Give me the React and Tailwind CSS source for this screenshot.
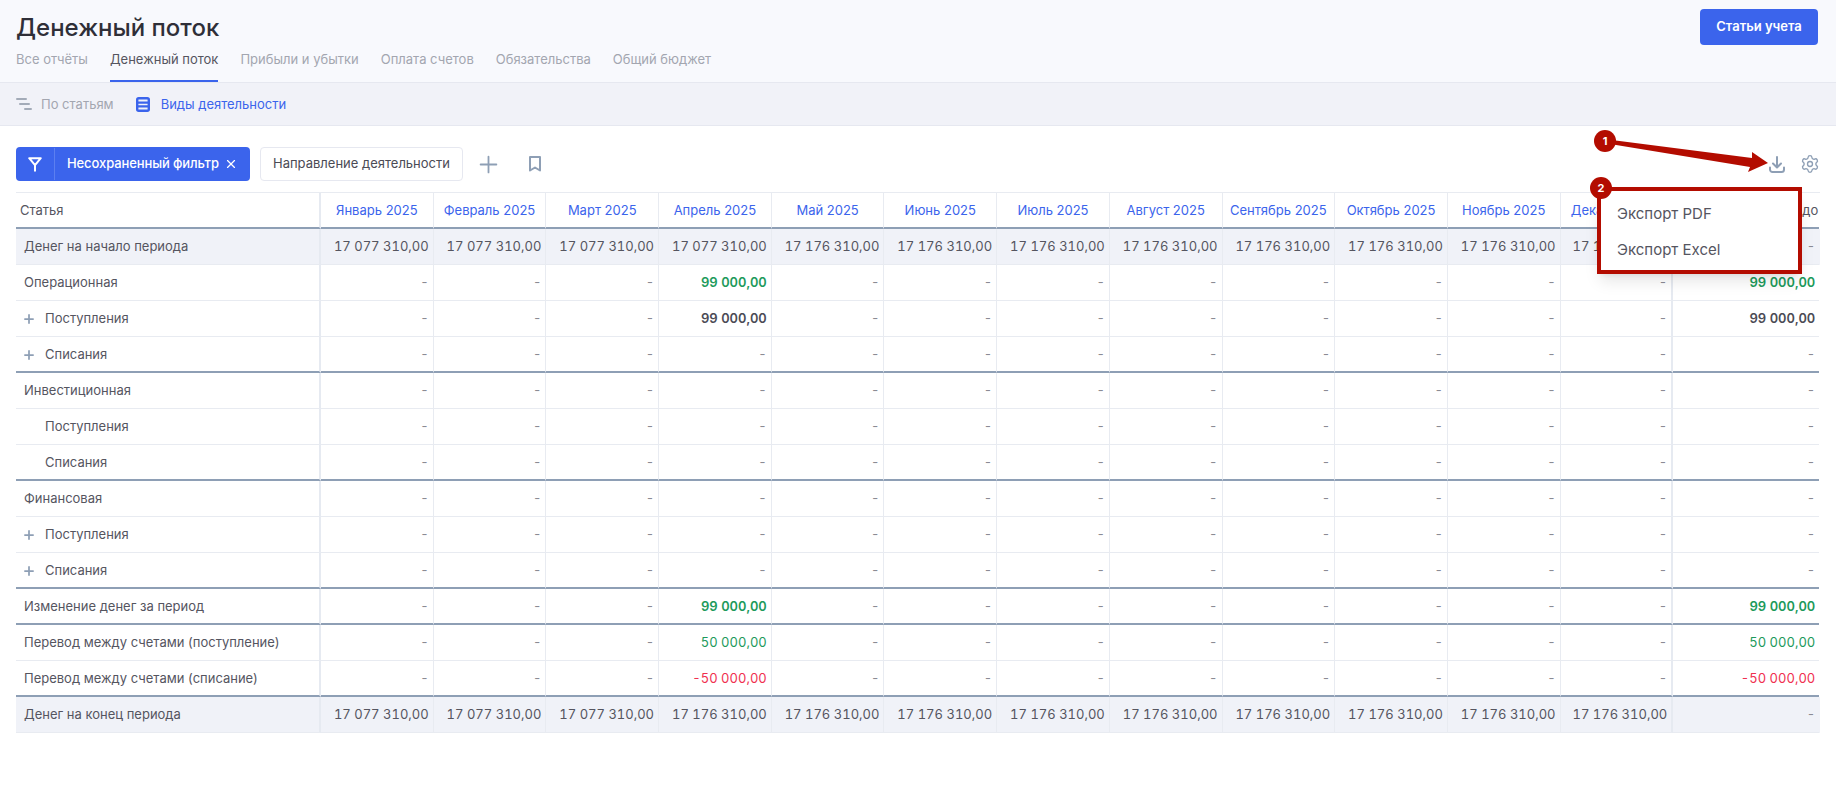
import { Plus, X, Settings } from "lucide-react";

const tabs = ["Все отчёты", "Денежный поток", "Прибыли и убытки", "Оплата счетов", "Обязательства", "Общий бюджет"];
const months = ["Январь", "Февраль", "Март", "Апрель", "Май", "Июнь", "Июль", "Август", "Сентябрь", "Октябрь", "Ноябрь", "Декабрь"];

const start = ["17 077 310,00", "17 077 310,00", "17 077 310,00", "17 077 310,00", "17 176 310,00", "17 176 310,00", "17 176 310,00", "17 176 310,00", "17 176 310,00", "17 176 310,00", "17 176 310,00", "17 176 310,00", "-"];
const end = ["17 077 310,00", "17 077 310,00", "17 077 310,00", "17 176 310,00", "17 176 310,00", "17 176 310,00", "17 176 310,00", "17 176 310,00", "17 176 310,00", "17 176 310,00", "17 176 310,00", "17 176 310,00", "-"];

const april = (value) => {
  const cells = Array(13).fill("-");
  cells[3] = value;
  cells[12] = value;
  return cells;
};
const empty = Array(13).fill("-");

const rows = [
  { label: "Денег на начало периода", cells: start, gray: true },
  { label: "Операционная", cells: april("99 000,00"), color: "text-[#1d9a5b] font-semibold" },
  { label: "Поступления", cells: april("99 000,00"), color: "text-[#4b4b55] font-semibold", child: true, plus: true },
  { label: "Списания", cells: empty, child: true, plus: true, heavy: true },
  { label: "Инвестиционная", cells: empty },
  { label: "Поступления", cells: empty, child: true },
  { label: "Списания", cells: empty, child: true, heavy: true },
  { label: "Финансовая", cells: empty },
  { label: "Поступления", cells: empty, child: true, plus: true },
  { label: "Списания", cells: empty, child: true, plus: true, heavy: true },
  { label: "Изменение денег за период", cells: april("99 000,00"), color: "text-[#1d9a5b] font-semibold", heavy: true },
  { label: "Перевод между счетами (поступление)", cells: april("50 000,00"), color: "text-[#1d9a5b]" },
  { label: "Перевод между счетами (списание)", cells: april("-50 000,00"), color: "text-[#f0304f]", heavy: true },
  { label: "Денег на конец периода", cells: end, gray: true },
];

const gridCols = "grid grid-cols-[305px_repeat(12,112.7px)_146px]";

const Row = ({ row }) => {
  const bg = row.gray ? "bg-[#f0f2f8]" : "bg-white";
  const bottom = row.heavy ? "border-b-2 border-b-[#8e9fb5]" : "border-b border-b-[#e8ebf1]";
  return (
    <div className={`${gridCols} h-9 ${bg}`}>
      <div className={`flex items-center pl-[8px] pt-px border-r-2 border-r-[#e6eaf1] text-[#55555f] ${bottom}`}>
        {row.child && (
          <span className="w-[21px] shrink-0 flex items-center">
            {row.plus && <Plus size={14} strokeWidth={3} className="-ml-[2px] text-[#8e9fb5]" />}
          </span>
        )}
        {row.label}
      </div>
      {row.cells.map((cell, i) => (
        <div
          key={i}
          className={`flex items-center justify-end pr-[4px] pt-px tabular-nums ${bottom} ${
            i === 11 ? "border-r-2 border-r-[#e6eaf1]" : i === 12 ? "" : "border-r border-r-[#e8ebf1]"
          } ${cell === "-" ? "text-[#8b8b94]" : row.color || "text-[#55555f]"}`}
        >
          {cell}
        </div>
      ))}
    </div>
  );
};

const App = () => {
  return (
    <div className="relative h-[787px] w-[1836px] overflow-hidden bg-white font-['Inter',sans-serif] text-[13px] text-[#55555f]">
      <header className="h-[83px] bg-[#f8f9fd] border-b border-[#e6e8f0] px-4 flex justify-between">
        <div>
          <h1 className="pt-[11px] text-[24px] leading-[34px] font-medium text-[#2f2f38]">Денежный поток</h1>
          <nav className="mt-[2px] flex gap-[22px]">
            {tabs.map((tab, i) => (
              <a
                key={tab}
                className={`h-[35px] pt-[2px] leading-[20px] ${i === 1 ? "border-b-2 border-[#3b64ec] text-[#55555f]" : "text-[#a3a6b0]"}`}
              >
                {tab}
              </a>
            ))}
          </nav>
        </div>
        <button className="mt-[9px] mr-[2px] h-9 w-[118px] rounded bg-[#3b64ec] text-white font-semibold">Статьи учета</button>
      </header>

      <div className="h-[43px] bg-[#f1f2f8] border-b border-[#e6e8f0] px-4 flex items-center">
        <svg width="16" height="14" viewBox="0 0 16 14" fill="none" stroke="#a3abb8" strokeWidth="2" strokeLinecap="round">
          <path d="M1 2h9M4 7h9M9 12h6" />
        </svg>
        <span className="ml-[9px] mt-[2px] text-[#a3a6b0]">По статьям</span>
        <svg className="ml-[22px]" width="14" height="15" viewBox="0 0 14 15" fill="none" stroke="#3b64ec" strokeWidth="2.4">
          <rect x="1.2" y="1.2" width="11.6" height="12.6" rx="1.5" />
          <path d="M1 5.6h12M1 9.4h12" />
        </svg>
        <span className="ml-[11px] mt-[2px] text-[#3b64ec]">Виды деятельности</span>
      </div>

      <div className="px-4 pt-[21px]">
        <div className="flex items-center h-[34px]">
          <div className="flex items-center h-[34px] w-[234px] rounded bg-[#3b64ec] text-white font-medium">
            <span className="w-[39px] h-[32px] flex items-center justify-center border-r border-[#5c7ff0]">
              <svg width="14" height="15" viewBox="0 0 14 15" fill="none" stroke="white" strokeWidth="2" strokeLinejoin="round" strokeLinecap="round">
                <path d="M1.2 1.2h11.6L7 8.2zM7 8.2v5.6" />
              </svg>
            </span>
            <span className="ml-3 tracking-[-0.1px]">Несохраненный фильтр</span>
            <X size={14} className="ml-[5px]" />
          </div>
          <div className="ml-[10px] h-[34px] w-[203px] flex items-center justify-center rounded border border-[#e6e8f0] text-[#4b4b55]">
            Направление деятельности
          </div>
          <Plus size={27} strokeWidth={1.6} className="ml-[12px] text-[#8e9fb5]" />
          <svg className="ml-[27px]" width="12" height="16" viewBox="0 0 12 16" fill="none" stroke="#8e9fb5" strokeWidth="2" strokeLinejoin="round">
            <path d="M1 1h10v13.5l-5-3-5 3z" />
          </svg>
          <svg className="ml-auto" width="16" height="17" viewBox="0 0 16 17" fill="none" stroke="#8e9fb5" strokeWidth="2" strokeLinecap="round" strokeLinejoin="round">
            <path d="M8 1v10M4 7.5 8 11.5l4-4M1 11.5v2a2.5 2.5 0 0 0 2.5 2.5h9a2.5 2.5 0 0 0 2.5-2.5v-2" />
          </svg>
          <Settings size={20} strokeWidth={1.6} className="ml-[15px] text-[#8e9fb5]" />
        </div>

        <div className="mt-[11px] border-t border-[#e8ebf1]">
          <div className={`${gridCols} h-[36px]`}>
            <div className="flex items-center pl-[4px] pt-px border-r-2 border-r-[#e6eaf1] border-b-2 border-b-[#8e9fb5] text-[#55555f]">Статья</div>
            {months.map((m) => (
              <div key={m} className="flex items-center justify-center pt-px border-r border-r-[#e8ebf1] border-b-2 border-b-[#8e9fb5] text-[#3b64ec]">
                {m} 2025
              </div>
            ))}
            <div className="flex items-center justify-end pr-[1px] pt-px border-b-2 border-b-[#8e9fb5]">Сальдо</div>
          </div>
          {rows.map((row, i) => (
            <Row key={i} row={row} />
          ))}
        </div>
      </div>

      {/* разметка поверх скриншота: стрелка, номера и меню экспорта */}
      <svg className="absolute left-0 top-0 pointer-events-none" width="1836" height="787">
        <path d="M1604 139 L1752 158 L1752 152 L1768 163 L1748 172 L1750 167 L1604 143 Z" fill="#b30c00" />
      </svg>
      <div className="absolute left-[1597px] top-[187px] w-[205px] h-[87px] bg-white border-[4px] border-[#b30c00] shadow-lg text-[15px] text-[#55555f]">
        <div className="pl-[16px] pt-[11px] leading-[24px]">Экспорт PDF</div>
        <div className="pl-[16px] pt-[12px] leading-[24px]">Экспорт Excel</div>
      </div>
      <div className="absolute left-[1594px] top-[130px] w-[22px] h-[22px] rounded-full bg-[#b30c00] text-white text-[11px] font-bold flex items-center justify-center">1</div>
      <div className="absolute left-[1590px] top-[177px] w-[22px] h-[22px] rounded-full bg-[#b30c00] text-white text-[11px] font-bold flex items-center justify-center">2</div>
    </div>
  );
};

export default App;
